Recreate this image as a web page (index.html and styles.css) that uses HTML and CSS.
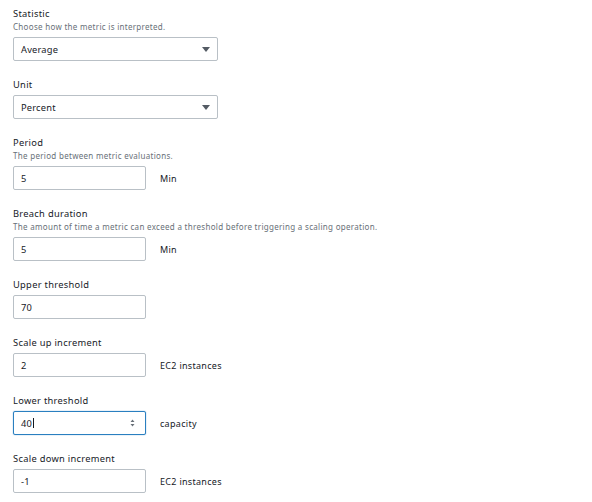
FILE: index.html
```html
<!DOCTYPE html>
<html>
<head>
<meta charset="utf-8">
<link rel="stylesheet" href="styles.css">
</head>
<body>
<form class="form">
  <div class="field">
    <div class="label">Statistic</div>
    <div class="desc">Choose how the metric is interpreted.</div>
    <div class="select"><span>Average</span><svg class="caret" width="8" height="5" viewBox="0 0 8 5"><path d="M0 0h8L4 5z" fill="#545b64"/></svg></div>
  </div>
  <div class="field">
    <div class="label">Unit</div>
    <div class="select"><span>Percent</span><svg class="caret" width="8" height="5" viewBox="0 0 8 5"><path d="M0 0h8L4 5z" fill="#545b64"/></svg></div>
  </div>
  <div class="field">
    <div class="label">Period</div>
    <div class="desc">The period between metric evaluations.</div>
    <div class="row"><div class="input">5</div><span class="unit">Min</span></div>
  </div>
  <div class="field">
    <div class="label">Breach duration</div>
    <div class="desc">The amount of time a metric can exceed a threshold before triggering a scaling operation.</div>
    <div class="row"><div class="input">5</div><span class="unit">Min</span></div>
  </div>
  <div class="field">
    <div class="label">Upper threshold</div>
    <div class="row"><div class="input">70</div></div>
  </div>
  <div class="field">
    <div class="label">Scale up increment</div>
    <div class="row"><div class="input">2</div><span class="unit">EC2 instances</span></div>
  </div>
  <div class="field">
    <div class="label">Lower threshold</div>
    <div class="row"><div class="input focus"><span class="val">40<span class="cursor"></span></span><svg class="spin" width="5" height="8" viewBox="0 0 5 8"><path d="M2.5 0.5L4.5 3H0.5z M2.5 7.5L0.5 5h4z" fill="#687078"/></svg></div><span class="unit">capacity</span></div>
  </div>
  <div class="field">
    <div class="label">Scale down increment</div>
    <div class="row"><div class="input">-1</div><span class="unit">EC2 instances</span></div>
  </div>
</form>
</body>
</html>
```
FILE: styles.css
```css
html, body {
  margin: 0;
  padding: 0;
  background: #ffffff;
}
body {
  font-family: "Noto Sans", "Open Sans", sans-serif;
  color: #16191f;
}
.form {
  display: flex;
  flex-direction: column;
  gap: 17px;
  padding: 7px 0 0 13px;
}
.field {
  display: flex;
  flex-direction: column;
}
.label {
  font-size: 9.3px;
  letter-spacing: 0.3px;
  line-height: 13px;
  margin-bottom: 4px;
  color: #16191f;
}
.desc {
  font-size: 8px;
  letter-spacing: 0.3px;
  line-height: 13px;
  margin-top: -4px;
  margin-bottom: 4px;
  color: #687078;
}
.select {
  box-sizing: border-box;
  width: 205px;
  height: 24px;
  border: 1px solid #b9c0c6;
  border-radius: 2px;
  display: flex;
  align-items: center;
  justify-content: space-between;
  padding: 0 7px 0 7px;
  font-size: 9.3px;
  letter-spacing: 0.2px;
}
.row {
  display: flex;
  align-items: center;
  gap: 14px;
}
.input {
  box-sizing: border-box;
  width: 133px;
  height: 24px;
  border: 1px solid #b9c0c6;
  border-radius: 2px;
  display: flex;
  align-items: center;
  justify-content: space-between;
  padding: 0 10px 0 7px;
  font-size: 9.3px;
  letter-spacing: 0.2px;
}
.input.focus {
  border: 1.5px solid #2a7fc0;
  box-shadow: 0 0 1px #2a7fc0;
}
.val {
  display: flex;
  align-items: center;
}
.cursor {
  display: inline-block;
  width: 1px;
  height: 10px;
  background: #16191f;
  margin-left: 0.5px;
}
.unit {
  font-size: 9px;
  letter-spacing: 0.3px;
  color: #16191f;
}
```
